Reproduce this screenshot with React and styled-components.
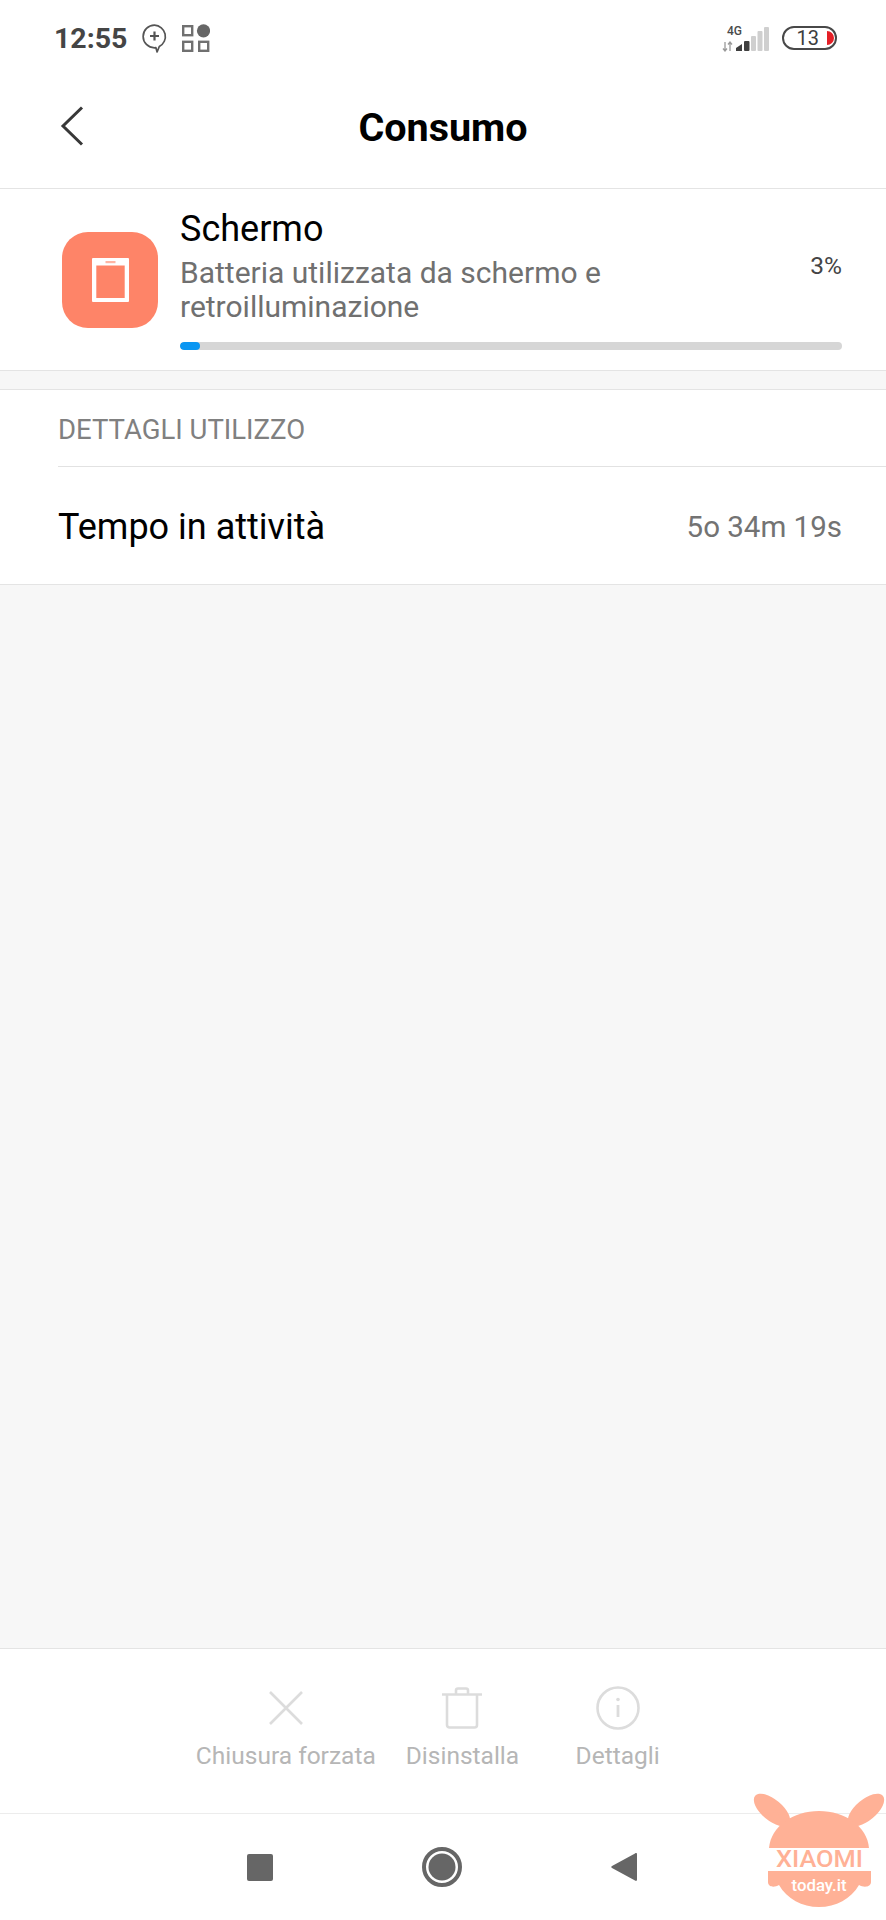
import styled, { createGlobalStyle } from "styled-components"

const GlobalStyle = createGlobalStyle`
  html, body {
    margin: 0;
    padding: 0;
    background: #fff;
    font-family: Roboto, "Noto Sans", sans-serif;
  }
`

const Page = styled.div`
  position: relative;
  width: 886px;
  height: 1920px;
  display: flex;
  flex-direction: column;
  overflow: hidden;
  background: #f7f7f7;
`

/* status bar */
const StatusBar = styled.div`
  height: 64px;
  padding: 14px 49px 0 54px;
  box-sizing: border-box;
  display: flex;
  align-items: flex-start;
  background: #fff;
`

const Clock = styled.span`
  width: 74px;
  font-size: 28.5px;
  line-height: 50px;
  font-weight: 700;
  color: #454545;
  margin-right: 14px;
`

const StatusLeft = styled.div`
  display: flex;
  align-items: flex-start;
  gap: 15px;
  padding-top: 10px;
  svg { display: block; }
`

const StatusRight = styled.div`
  margin-left: auto;
  display: flex;
  align-items: flex-start;
  gap: 13px;
  padding-top: 12px;
  svg { display: block; }
`

const NetWrap = styled.div`
  position: relative;
  width: 47px;
  height: 26px;
`

const NetLabel = styled.span`
  position: absolute;
  left: 5px;
  top: -1px;
  font-size: 12px;
  line-height: 12px;
  font-weight: 500;
  color: #4a4a4a;
`

const Battery = styled.div`
  width: 55px;
  height: 24px;
  box-sizing: border-box;
  border: 2.5px solid #484848;
  border-radius: 12px;
  padding-right: 1px;
  display: flex;
  align-items: center;
  justify-content: flex-end;
  gap: 8px;
`

const BatteryValue = styled.span`
  font-size: 20px;
  line-height: 19px;
  color: #3d3d3d;
`

const BatteryLevel = styled.span`
  width: 7px;
  height: 14px;
  background: #e41f26;
  border-radius: 0 7px 7px 0;
`

/* title */
const Header = styled.header`
  height: 125px;
  box-sizing: border-box;
  display: grid;
  grid-template-columns: 1fr auto 1fr;
  align-items: center;
  padding: 0 60px;
  background: #fff;
  border-bottom: 1px solid #e4e4e4;
`

const BackButton = styled.div`
  display: flex;
  svg { display: block; }
`

const Title = styled.h1`
  margin: 3px 0 0;
  font-size: 39.5px;
  line-height: 44px;
  font-weight: 700;
  color: #000;
`

/* usage card */
const UsageCard = styled.section`
  height: 182px;
  box-sizing: border-box;
  display: flex;
  padding: 19px 44px 0 62px;
  gap: 22px;
  background: #fff;
  border-bottom: 1px solid #e4e4e4;
`

const AppIcon = styled.div`
  flex: none;
  width: 96px;
  height: 96px;
  margin-top: 24px;
  border-radius: 26px;
  background: #fe8468;
  display: flex;
  align-items: center;
  justify-content: center;
`

const UsageBody = styled.div`
  flex: 1;
  display: flex;
  flex-direction: column;
`

const UsageTop = styled.div`
  display: flex;
  justify-content: space-between;
  align-items: flex-start;
`

const UsageName = styled.div`
  font-size: 36px;
  line-height: 42px;
  color: #000;
`

const UsageDesc = styled.div`
  margin-top: 6px;
  font-size: 30px;
  line-height: 34px;
  color: #707070;
`

const UsagePercent = styled.div`
  margin-top: 44px;
  font-size: 24.5px;
  line-height: 28px;
  color: #444;
`

const Track = styled.div`
  margin-top: 18px;
  height: 8px;
  border-radius: 4px;
  background: #d6d6d6;
  overflow: hidden;
`

const TrackFill = styled.div`
  height: 100%;
  border-radius: 4px;
  background: #0a96f2;
`

/* details */
const Details = styled.section`
  margin-top: 18px;
  background: #fff;
  border-top: 1px solid #e4e4e4;
  border-bottom: 1px solid #e4e4e4;
`

const SectionHead = styled.div`
  margin-left: 58px;
  height: 77px;
  padding-top: 2px;
  box-sizing: border-box;
  display: flex;
  align-items: center;
  font-size: 27.5px;
  color: #808080;
  border-bottom: 1px solid #e2e2e2;
`

const DetailRow = styled.div`
  height: 117px;
  box-sizing: border-box;
  display: flex;
  align-items: center;
  justify-content: space-between;
  padding: 3px 44px 0 58px;
`

const DetailLabel = styled.span`
  font-size: 36px;
  color: #000;
`

const DetailValue = styled.span`
  font-size: 29.5px;
  color: #737373;
`

const Spacer = styled.div`
  flex: 1;
`

/* bottom actions */
const Actions = styled.div`
  height: 166px;
  box-sizing: border-box;
  display: flex;
  justify-content: center;
  gap: 30px;
  padding-right: 4px;
  background: #fff;
  border-top: 1px solid #e4e4e4;
  border-bottom: 1px solid #ececec;
`

const Action = styled.div`
  min-width: ${(p) => p.$minWidth || 0}px;
  padding-top: 36px;
  display: flex;
  flex-direction: column;
  align-items: center;
  svg { display: block; }
`

const ActionIcon = styled.div`
  height: 46px;
  display: flex;
  align-items: center;
`

const ActionLabel = styled.span`
  margin-top: 9px;
  font-size: 24.5px;
  line-height: 32px;
  color: #b6b6b6;
  white-space: nowrap;
`

/* system nav */
const NavBar = styled.nav`
  height: 106px;
  box-sizing: border-box;
  display: flex;
  align-items: center;
  justify-content: center;
  gap: 149px;
  padding: 0 2px 0 0;
  background: #fff;
  svg { display: block; }
`

const Watermark = styled.svg`
  position: absolute;
  left: 750px;
  top: 1790px;
`

function BubbleIcon() {
  return (
    <svg width="25" height="30" viewBox="0 0 25 30" fill="none">
      <path d="M12.500 1.200a11.300 11.300 0 1 0-.1 22.600c.5 0 1 0 1.500-.1l1.200 4.300 2.200-5.500a11.300 11.300 0 0 0-4.800-21.300z" stroke="#555" strokeWidth="1.700" strokeLinejoin="round" />
      <path d="M12.500 7.500v9M8 12h9" stroke="#555" strokeWidth="2.200" />
    </svg>
  )
}

function GridIcon() {
  return (
    <svg width="28" height="28" viewBox="0 0 28 28" fill="none">
      <rect x="1.200" y="2.200" width="9" height="9" stroke="#707070" strokeWidth="2.400" />
      <rect x="1.200" y="17.800" width="9" height="9" stroke="#707070" strokeWidth="2.400" />
      <rect x="17.200" y="17.800" width="9" height="9" stroke="#707070" strokeWidth="2.400" />
      <circle cx="21.500" cy="6.800" r="6.600" fill="#666" />
    </svg>
  )
}

function SignalIcon() {
  return (
    <svg width="47" height="26" viewBox="0 0 47 26" fill="none">
      <path d="M3 16v9M1 22.500l2 2.500 2-2.500" stroke="#9a9a9a" strokeWidth="1.300" />
      <path d="M8 25v-9M6 18.500l2-2.500 2 2.500" stroke="#9a9a9a" strokeWidth="1.300" />
      <path d="M14 25v-3l6-4v7z" fill="#3f3f3f" />
      <rect x="22" y="15" width="5.500" height="10" rx="1" fill="#3f3f3f" />
      <rect x="29" y="10" width="5" height="15" rx="1" fill="#cfcfcf" />
      <rect x="35.500" y="5" width="5" height="20" rx="1" fill="#cfcfcf" />
      <rect x="42" y="1" width="5" height="24" rx="1" fill="#cfcfcf" />
    </svg>
  )
}

function DeviceIcon() {
  return (
    <svg width="37" height="44" viewBox="0 0 37 44">
      <path fillRule="evenodd" d="M1 0h35a1 1 0 0 1 1 1v42a1 1 0 0 1-1 1H1a1 1 0 0 1-1-1V1a1 1 0 0 1 1-1zM4.300 7.500V40h28.400V7.500z" fill="#fff" />
      <rect x="13.500" y="3" width="10" height="2.200" fill="#ffb5a3" />
    </svg>
  )
}

function ChevronLeft() {
  return (
    <svg width="24" height="42" viewBox="0 0 24 42" fill="none">
      <path d="M22 2.500 3 21l19 18.500" stroke="#383838" strokeWidth="3" />
    </svg>
  )
}

function CloseIcon() {
  return (
    <svg width="36" height="36" viewBox="0 0 36 36" fill="none">
      <path d="M2 2l32 32M34 2 2 34" stroke="#dcdcdc" strokeWidth="2.600" />
    </svg>
  )
}

function TrashIcon() {
  return (
    <svg width="42" height="42" viewBox="0 0 42 42" fill="none">
      <path d="M1 7.500h40" stroke="#dcdcdc" strokeWidth="2.600" />
      <path d="M6 8v30a2.500 2.500 0 0 0 2.500 2.500h25A2.500 2.500 0 0 0 36 38V8" stroke="#dcdcdc" strokeWidth="2.600" />
      <path d="M15 7V3.500A2 2 0 0 1 17 1.500h8a2 2 0 0 1 2 2V7" stroke="#dcdcdc" strokeWidth="2.600" />
    </svg>
  )
}

function InfoIcon() {
  return (
    <svg width="44" height="44" viewBox="0 0 44 44" fill="none">
      <circle cx="22" cy="22" r="20.500" stroke="#dcdcdc" strokeWidth="2.600" />
      <circle cx="22" cy="13.500" r="1.800" fill="#dcdcdc" />
      <path d="M22 19v12" stroke="#dcdcdc" strokeWidth="2.800" />
    </svg>
  )
}

function LogoMark() {
  return (
    <Watermark width="136" height="120" viewBox="0 0 136 120">
      <ellipse cx="22" cy="20" rx="22" ry="10.500" transform="rotate(40 22 20)" fill="#ffb196" />
      <ellipse cx="116" cy="20" rx="22" ry="10.500" transform="rotate(-40 116 20)" fill="#ffb196" />
      <path d="M19 58C21 36 43 21 69 21s48 15 50 37z" fill="#ffb196" />
      <path d="M18 81h103v11c0 5-7 6-12 3-8 14-23 22-40 22s-32-8-40-22c-5 3-11 2-11-3z" fill="#ffb196" />
      <text x="69.500" y="77" textAnchor="middle" textLength="87" lengthAdjust="spacingAndGlyphs" fontFamily="Roboto, sans-serif" fontSize="23" fontWeight="500" fill="#ffb196">XIAOMI</text>
      <text x="69" y="101" textAnchor="middle" textLength="55" lengthAdjust="spacingAndGlyphs" fontFamily="Roboto, sans-serif" fontSize="17" fontWeight="500" fill="#fff">today.it</text>
    </Watermark>
  )
}

export default function App() {
  return (
    <Page>
      <GlobalStyle />
      <StatusBar>
        <Clock>12:55</Clock>
        <StatusLeft>
          <BubbleIcon />
          <GridIcon />
        </StatusLeft>
        <StatusRight>
          <NetWrap>
            <NetLabel>4G</NetLabel>
            <SignalIcon />
          </NetWrap>
          <Battery>
            <BatteryValue>13</BatteryValue>
            <BatteryLevel />
          </Battery>
        </StatusRight>
      </StatusBar>

      <Header>
        <BackButton>
          <ChevronLeft />
        </BackButton>
        <Title>Consumo</Title>
      </Header>

      <UsageCard>
        <AppIcon>
          <DeviceIcon />
        </AppIcon>
        <UsageBody>
          <UsageTop>
            <div>
              <UsageName>Schermo</UsageName>
              <UsageDesc>
                Batteria utilizzata da schermo e
                <br />
                retroilluminazione
              </UsageDesc>
            </div>
            <UsagePercent>3%</UsagePercent>
          </UsageTop>
          <Track>
            <TrackFill style={{ width: "3%" }} />
          </Track>
        </UsageBody>
      </UsageCard>

      <Details>
        <SectionHead>DETTAGLI UTILIZZO</SectionHead>
        <DetailRow>
          <DetailLabel>Tempo in attività</DetailLabel>
          <DetailValue>5o 34m 19s</DetailValue>
        </DetailRow>
      </Details>

      <Spacer />

      <Actions>
        <Action>
          <ActionIcon>
            <CloseIcon />
          </ActionIcon>
          <ActionLabel>Chiusura forzata</ActionLabel>
        </Action>
        <Action>
          <ActionIcon>
            <TrashIcon />
          </ActionIcon>
          <ActionLabel>Disinstalla</ActionLabel>
        </Action>
        <Action $minWidth={137}>
          <ActionIcon>
            <InfoIcon />
          </ActionIcon>
          <ActionLabel>Dettagli</ActionLabel>
        </Action>
      </Actions>

      <NavBar>
        <svg width="26" height="27" viewBox="0 0 26 27">
          <rect width="26" height="27" rx="2" fill="#666" />
        </svg>
        <svg width="40" height="40" viewBox="0 0 40 40">
          <circle cx="20" cy="20" r="18" fill="none" stroke="#666" strokeWidth="4" />
          <circle cx="20" cy="20" r="13.500" fill="#666" />
        </svg>
        <svg width="26" height="30" viewBox="0 0 26 30">
          <path d="M24 1.500c1.200-.8 2-.3 2 1v25c0 1.300-.8 1.800-2 1L1 16c-1-.6-1-1.400 0-2z" fill="#666" />
        </svg>
      </NavBar>

      <LogoMark />
    </Page>
  )
}
